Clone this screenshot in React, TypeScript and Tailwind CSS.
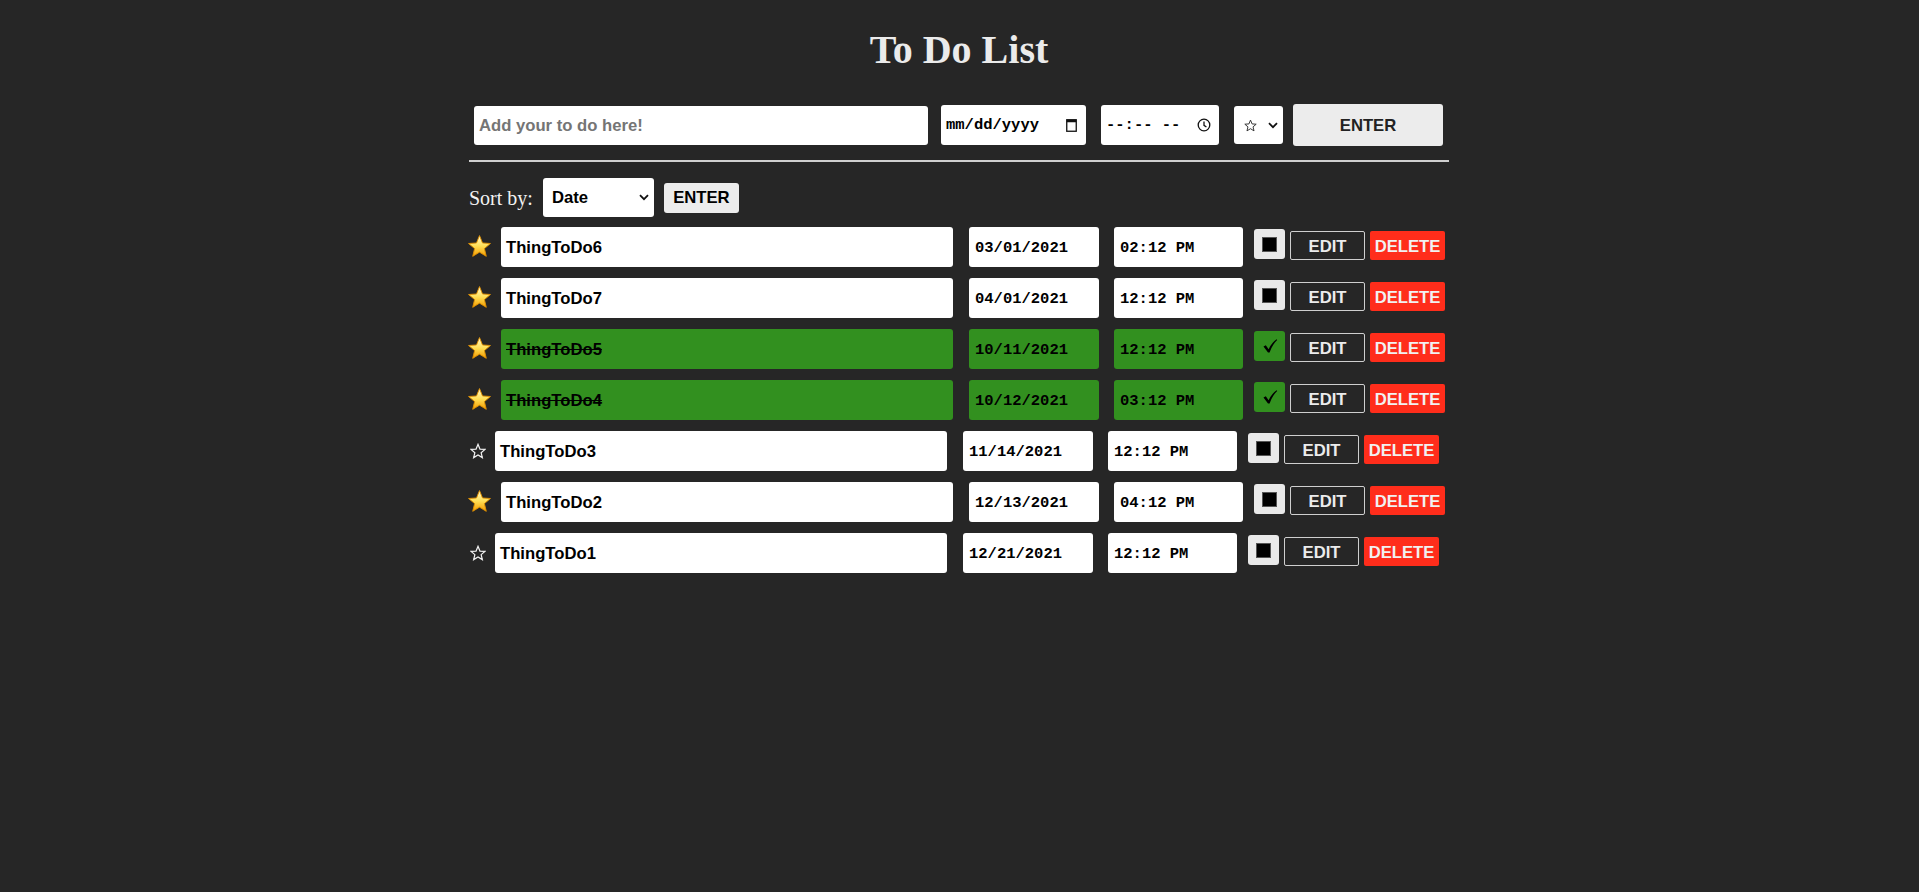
import React from 'react'

type Todo = {
  name: string
  date: string
  time: string
  starred: boolean
  done: boolean
}

const todos: Todo[] = [
  { name: 'ThingToDo6', date: '03/01/2021', time: '02:12 PM', starred: true, done: false },
  { name: 'ThingToDo7', date: '04/01/2021', time: '12:12 PM', starred: true, done: false },
  { name: 'ThingToDo5', date: '10/11/2021', time: '12:12 PM', starred: true, done: true },
  { name: 'ThingToDo4', date: '10/12/2021', time: '03:12 PM', starred: true, done: true },
  { name: 'ThingToDo3', date: '11/14/2021', time: '12:12 PM', starred: false, done: false },
  { name: 'ThingToDo2', date: '12/13/2021', time: '04:12 PM', starred: true, done: false },
  { name: 'ThingToDo1', date: '12/21/2021', time: '12:12 PM', starred: false, done: false },
]

const starPoints = '12,1.5 14.9,8.6 22.5,9.1 16.7,14 18.5,21.4 12,17.4 5.5,21.4 7.3,14 1.5,9.1 9.1,8.6'

function GoldStar() {
  return (
    <svg width="25" height="24" viewBox="0 0 24 23">
      <defs>
        <linearGradient id="goldFill" x1="0" y1="0" x2="0" y2="1">
          <stop offset="0" stopColor="#fffbd6" />
          <stop offset="0.5" stopColor="#ffdf55" />
          <stop offset="1" stopColor="#f39c00" />
        </linearGradient>
      </defs>
      <polygon points={starPoints} fill="url(#goldFill)" stroke="#e09000" strokeWidth="0.9" strokeLinejoin="round" />
    </svg>
  )
}

function OutlineStar({ color, size }: { color: string; size: number }) {
  return (
    <svg width={size} height={size} viewBox="0 0 24 23">
      <polygon points={starPoints} fill="none" stroke={color} strokeWidth="1.8" strokeLinejoin="miter" />
    </svg>
  )
}

function Chevron() {
  return (
    <svg width="10" height="7" viewBox="0 0 10 7">
      <path d="M1 1.2 L5 5.2 L9 1.2" fill="none" stroke="#111" strokeWidth="1.8" />
    </svg>
  )
}

function CalendarIcon() {
  return (
    <svg width="11" height="14" viewBox="0 0 11 14">
      <rect x="0.75" y="1.75" width="9.5" height="11.5" fill="none" stroke="#111" strokeWidth="1.3" />
      <rect x="0.75" y="1.75" width="9.5" height="2.5" fill="#111" />
    </svg>
  )
}

function ClockIcon() {
  return (
    <svg width="14" height="14" viewBox="0 0 14 14">
      <circle cx="7" cy="7" r="5.8" fill="none" stroke="#111" strokeWidth="1.3" />
      <path d="M7 3.6 L7 7.3 L9.4 9" fill="none" stroke="#111" strokeWidth="1.3" />
    </svg>
  )
}

function CheckMark() {
  return (
    <svg width="16" height="16" viewBox="0 0 16 16">
      <path d="M1.5 8.6 L3.8 7.2 L6.6 11.2 C8.6 7 11.2 3.6 14.6 1.2 L15.2 1.9 C12 4.8 9.4 9.2 7.6 14.6 L6 14.6 Z" fill="#000" />
    </svg>
  )
}

const sans = 'font-["Liberation_Sans",Arial,sans-serif]'
const mono = 'font-["Liberation_Mono","Courier_New",monospace]'

function TodoRow({ todo }: { todo: Todo }) {
  const fill = todo.done ? 'bg-[#32901f]' : 'bg-white'
  return (
    <div className="flex h-[40px] items-start">
      {todo.starred ? (
        <div className="flex h-[40px] w-[32px] shrink-0 items-center">
          <div className="-ml-[2px] -mt-[3px]">
            <GoldStar />
          </div>
        </div>
      ) : (
        <div className="flex h-[40px] w-[26px] shrink-0 items-center">
          <div className="ml-[1px] -mt-[1px]">
            <OutlineStar color="#f2f2f2" size={16} />
          </div>
        </div>
      )}
      <div className={`flex h-[40px] w-[452px] shrink-0 items-center rounded-[3px] px-[5px] ${fill}`}>
        <span className={`${sans} text-[16.67px] font-bold text-black ${todo.done ? 'line-through' : ''}`}>
          {todo.name}
        </span>
      </div>
      <div className={`ml-[16px] flex h-[40px] w-[130px] shrink-0 items-center rounded-[3px] px-[6px] pt-[3px] ${fill}`}>
        <span className={`${mono} whitespace-pre text-[15.5px] font-bold text-black`}>{todo.date}</span>
      </div>
      <div className={`ml-[15px] flex h-[40px] w-[129px] shrink-0 items-center rounded-[3px] px-[6px] pt-[3px] ${fill}`}>
        <span className={`${mono} whitespace-pre text-[15.5px] font-bold text-black`}>{todo.time}</span>
      </div>
      {todo.done ? (
        <div className="ml-[11px] mt-[2px] flex h-[30px] w-[31px] shrink-0 items-center justify-center rounded-[3px] bg-[#32901f]">
          <CheckMark />
        </div>
      ) : (
        <div className="ml-[11px] mt-[2px] flex h-[30px] w-[31px] shrink-0 items-center justify-center rounded-[3px] bg-[#e9e9e9]">
          <div className="h-[15px] w-[15px] border border-[#555] bg-black" />
        </div>
      )}
      <button
        className={`${sans} ml-[5px] mt-[4px] flex h-[29px] w-[75px] shrink-0 items-center justify-center rounded-[2px] border border-[#cfcfcf] pt-[2px] text-[16.67px] font-bold text-[#ececec]`}
      >
        EDIT
      </button>
      <button
        className={`${sans} ml-[5px] mt-[4px] flex h-[29px] w-[75px] shrink-0 items-center justify-center rounded-[2px] bg-[#ff2d1b] pt-[2px] text-[16.67px] font-bold text-[#f1f1f1]`}
      >
        DELETE
      </button>
    </div>
  )
}

export default function App() {
  return (
    <div className="min-h-[892px] w-full bg-[#262626]">
      <div className="ml-[469px] w-[980px]">
        <h1 className='pt-[27px] text-center font-["Liberation_Serif","Times_New_Roman",serif] text-[40px] font-bold leading-[46px] text-[#ebebeb]'>
          To Do List
        </h1>

        <div className="mt-[31px] flex h-[42px] items-center">
          <div className="ml-[5px] flex h-[39px] w-[454px] items-center rounded-[3px] bg-white px-[5px]">
            <span className={`${sans} text-[16.67px] font-bold text-[#757575]`}>Add your to do here!</span>
          </div>
          <div className="ml-[13px] flex h-[40px] w-[145px] items-center justify-between rounded-[3px] bg-white pl-[5px] pr-[9px]">
            <span className={`${mono} pt-[2px] text-[15.5px] font-bold text-black`}>mm/dd/yyyy</span>
            <CalendarIcon />
          </div>
          <div className="ml-[15px] flex h-[40px] w-[118px] items-center justify-between rounded-[3px] bg-white pl-[5px] pr-[8px]">
            <span className={`${mono} whitespace-pre pt-[2px] text-[15.5px] font-bold text-black`}>--:-- --</span>
            <ClockIcon />
          </div>
          <div className="ml-[15px] flex h-[38px] w-[49px] items-center justify-between rounded-[3px] bg-white pl-[10px] pr-[5px]">
            <OutlineStar color="#333" size={13} />
            <Chevron />
          </div>
          <button
            className={`${sans} ml-[10px] flex h-[42px] w-[150px] items-center justify-center rounded-[3px] bg-[#ececec] text-[16.67px] font-bold text-[#222]`}
          >
            ENTER
          </button>
        </div>

        <div className="mt-[14px] h-[2px] w-full bg-[#cfcfcf]" />

        <div className="mt-[16px] flex h-[39px] items-center">
          <span className='font-["Liberation_Serif","Times_New_Roman",serif] text-[20px] text-[#f2f2f2]'>Sort by:</span>
          <div className="ml-[10px] flex h-[39px] w-[111px] items-center justify-between rounded-[3px] bg-white pl-[9px] pr-[5px]">
            <span className={`${sans} text-[16.67px] font-bold text-black`}>Date</span>
            <Chevron />
          </div>
          <button
            className={`${sans} ml-[10px] flex h-[30px] w-[75px] items-center justify-center rounded-[3px] bg-[#ececec] text-[16.67px] font-bold text-black`}
          >
            ENTER
          </button>
        </div>

        <div className="mt-[10px] flex flex-col gap-[11px]">
          {todos.map((todo) => (
            <TodoRow key={todo.name} todo={todo} />
          ))}
        </div>
      </div>
    </div>
  )
}
